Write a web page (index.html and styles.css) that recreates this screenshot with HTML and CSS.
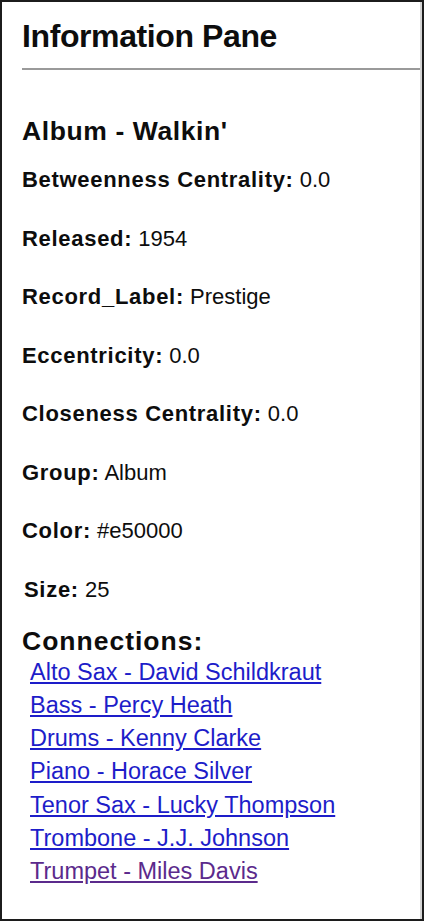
FILE: index.html
```html
<!DOCTYPE html>
<html lang="en">
  <head>
    <meta charset="UTF-8" />
    <meta name="viewport" content="width=device-width, initial-scale=1.0" />
    <title>Information Pane</title>
    <link rel="stylesheet" href="styles.css">
  </head>
  <body>
    <div class="pane">
      <h1>Information Pane</h1>
      <hr />

      <h2>Album - Walkin'</h2>
      <p><b>Betweenness Centrality:</b> 0.0</p>
      <p><b>Released:</b> 1954</p>
      <p><b>Record_Label:</b> Prestige</p>
      <p><b>Eccentricity:</b> 0.0</p>
      <p><b>Closeness Centrality:</b> 0.0</p>
      <p><b>Group:</b> Album</p>
      <p><b>Color:</b> #e50000</p>
      <p class="size"><b>Size:</b> 25</p>

      <h3>Connections:</h3>
      <ul class="connections">
        <li><a href="#">Alto Sax - David Schildkraut</a></li>
        <li><a href="#">Bass - Percy Heath</a></li>
        <li><a href="#">Drums - Kenny Clarke</a></li>
        <li><a href="#">Piano - Horace Silver</a></li>
        <li><a href="#">Tenor Sax - Lucky Thompson</a></li>
        <li><a href="#">Trombone - J.J. Johnson</a></li>
        <li><a href="#" class="visited">Trumpet - Miles Davis</a></li>
      </ul>
    </div>
  </body>
</html>
```

FILE: styles.css
```css
body {
  margin: 0;
  font-family: "Liberation Sans", Arial, sans-serif;
  color: #0d0d0d;
  background: #fff;
}
.pane {
  box-sizing: border-box;
  height: 921px;
  border: 2px solid #1c1c1c;
  box-shadow: inset -2px 0 0 #d4d4d4;
  padding: 0 2px 0 20px;
}
h1 {
  margin: 16px 0 0;
  font-size: 32px;
  line-height: 37px;
  letter-spacing: -0.4px;
}
hr {
  margin: 13px 0 0;
  border: none;
  height: 2px;
  background: #9a9a9a;
}
h2 {
  margin: 46px 0 0;
  font-size: 26.5px;
  line-height: 30px;
  letter-spacing: 0.6px;
}
p {
  margin: 21px 0 0;
  font-size: 22px;
  line-height: 26px;
}
p + p {
  margin-top: 32.5px;
}
p b {
  letter-spacing: 0.7px;
}
p.size {
  padding-left: 2px;
}
h3 {
  margin: 23px 0 0;
  font-size: 26.5px;
  line-height: 30px;
  letter-spacing: 1px;
}
.connections {
  list-style: none;
  margin: 0;
  padding: 0 0 0 8px;
  font-size: 23.5px;
  line-height: 33.33px;
}
.connections a {
  color: #1d1dc9;
}
.connections a.visited {
  color: #5b2a8c;
}
```
